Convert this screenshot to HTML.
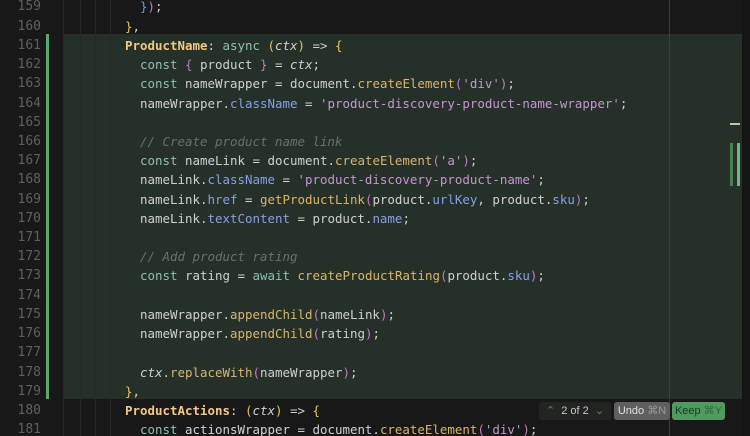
<!DOCTYPE html>
<html><head><meta charset="utf-8"><style>
html,body{margin:0;padding:0;width:750px;height:436px;overflow:hidden;background:#181818;}
.ed{position:relative;width:750px;height:436px;font-family:"DejaVu Sans Mono","Liberation Mono",monospace;font-size:12.46px;}
.hl{position:absolute;left:63px;top:34px;width:679px;height:365px;background:#253028;}
.bar{position:absolute;left:46px;top:34px;width:3px;height:365px;background:#5ea66f;}
.vl{position:absolute;left:669px;top:0;width:1px;height:436px;background:#3a3f3b;}
.sb{position:absolute;left:742px;top:0;width:8px;height:436px;background:#141414;}
.lines{position:absolute;left:0;top:-2.6px;}
.l{height:19.23px;line-height:19.23px;white-space:pre;position:relative;}
.n{position:absolute;left:0;width:41px;text-align:right;color:#5f5f5f;font-size:13px;}
.c{position:absolute;left:95px;color:#d0d0d0;}
.k{color:#8fbfb3}.f{color:#d9b56e}.p{color:#8a9ee6}.s{color:#c596cf}.cm{color:#6b6f6b;font-style:italic}
.i{font-style:italic}.b1{color:#e6c85a}.b2{color:#c678c8}.b3{color:#5aa0e6}.y{color:#efc987;font-weight:bold}
.g{position:absolute;top:0;height:436px;width:1px;background:#262926;}
.btn{position:absolute;top:402px;height:18px;font-family:"Liberation Sans",sans-serif;font-size:11px;line-height:18px;border-radius:3px;}
</style></head><body><div class="ed">
<div class="hl"></div>
<div class="g" style="left:63px"></div><div class="g" style="left:80px"></div><div class="g" style="left:95px"></div><div class="g" style="left:110px"></div>
<div class="bar"></div>
<div class="vl"></div>
<div class="sb"></div>
<div style="position:absolute;left:730px;top:123px;width:10px;height:1.5px;background:#b8c7b8"></div>
<div style="position:absolute;left:730px;top:143px;width:3px;height:43px;background:#4b7f55"></div>
<div style="position:absolute;left:737px;top:143px;width:3px;height:43px;background:#6cb87a"></div>
<div class="lines">
<div class="l"><span class="n">159</span><span class="c">      <span class="b3">}</span><span class="b2">)</span>;</span></div>
<div class="l"><span class="n">160</span><span class="c">    <span class="b1">}</span>,</span></div>
<div class="l"><span class="n">161</span><span class="c">    <span class="y">ProductName</span>: <span class="k">async</span> <span class="b1">(</span><span class="i">ctx</span><span class="b1">)</span> =&gt; <span class="b1">{</span></span></div>
<div class="l"><span class="n">162</span><span class="c">      <span class="k">const</span> <span class="b2">{</span> product <span class="b2">}</span> = <span class="i">ctx</span>;</span></div>
<div class="l"><span class="n">163</span><span class="c">      <span class="k">const</span> nameWrapper = document.<span class="f">createElement</span><span class="b2">(</span><span class="s">'div'</span><span class="b2">)</span>;</span></div>
<div class="l"><span class="n">164</span><span class="c">      nameWrapper.<span class="p">className</span> = <span class="s">'product-discovery-product-name-wrapper'</span>;</span></div>
<div class="l"><span class="n">165</span><span class="c"></span></div>
<div class="l"><span class="n">166</span><span class="c">      <span class="cm">// Create product name link</span></span></div>
<div class="l"><span class="n">167</span><span class="c">      <span class="k">const</span> nameLink = document.<span class="f">createElement</span><span class="b2">(</span><span class="s">'a'</span><span class="b2">)</span>;</span></div>
<div class="l"><span class="n">168</span><span class="c">      nameLink.<span class="p">className</span> = <span class="s">'product-discovery-product-name'</span>;</span></div>
<div class="l"><span class="n">169</span><span class="c">      nameLink.<span class="p">href</span> = <span class="f">getProductLink</span><span class="b2">(</span>product.<span class="p">urlKey</span>, product.<span class="p">sku</span><span class="b2">)</span>;</span></div>
<div class="l"><span class="n">170</span><span class="c">      nameLink.<span class="p">textContent</span> = product.<span class="p">name</span>;</span></div>
<div class="l"><span class="n">171</span><span class="c"></span></div>
<div class="l"><span class="n">172</span><span class="c">      <span class="cm">// Add product rating</span></span></div>
<div class="l"><span class="n">173</span><span class="c">      <span class="k">const</span> rating = <span class="k">await</span> <span class="f">createProductRating</span><span class="b2">(</span>product.<span class="p">sku</span><span class="b2">)</span>;</span></div>
<div class="l"><span class="n">174</span><span class="c"></span></div>
<div class="l"><span class="n">175</span><span class="c">      nameWrapper.<span class="f">appendChild</span><span class="b2">(</span>nameLink<span class="b2">)</span>;</span></div>
<div class="l"><span class="n">176</span><span class="c">      nameWrapper.<span class="f">appendChild</span><span class="b2">(</span>rating<span class="b2">)</span>;</span></div>
<div class="l"><span class="n">177</span><span class="c"></span></div>
<div class="l"><span class="n">178</span><span class="c">      <span class="i">ctx</span>.<span class="f">replaceWith</span><span class="b2">(</span>nameWrapper<span class="b2">)</span>;</span></div>
<div class="l"><span class="n">179</span><span class="c">    <span class="b1">}</span>,</span></div>
<div class="l"><span class="n">180</span><span class="c">    <span class="y">ProductActions</span>: <span class="b1">(</span><span class="i">ctx</span><span class="b1">)</span> =&gt; <span class="b1">{</span></span></div>
<div class="l"><span class="n">181</span><span class="c">      <span class="k">const</span> actionsWrapper = document.<span class="f">createElement</span><span class="b2">(</span><span class="s">'div'</span><span class="b2">)</span>;</span></div>
</div>
<div class="btn" style="left:539px;width:72px;background:#222422;color:#c8c8c8;text-align:center;"><span style="color:#777">&#8963;</span>&nbsp; 2 of 2 &nbsp;<span style="color:#777">&#8964;</span></div>
<div class="btn" style="left:614px;width:56px;background:#5f5f5f;color:#e0e0e0;text-align:center;">Undo <span style="color:#9a9a9a">⌘N</span></div>
<div class="btn" style="left:672px;width:53px;background:#4f9a5e;color:#163a1d;text-align:center;">Keep <span style="color:#2f6a3a">⌘Y</span></div>
</div></body></html>
